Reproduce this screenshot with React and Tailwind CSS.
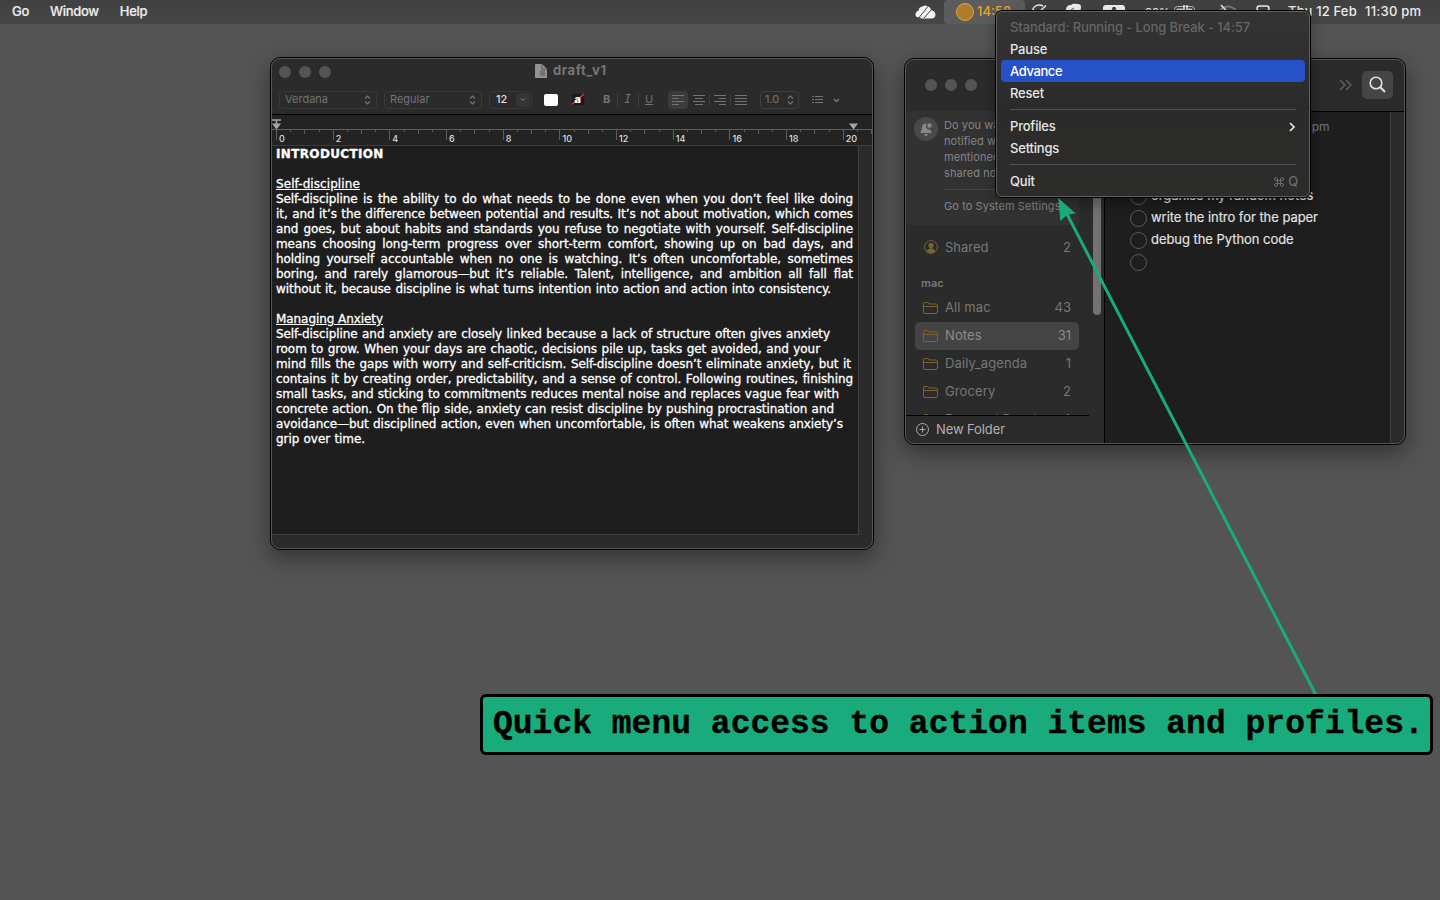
import clsx from 'clsx'

const introLines = [
  ['Self-discipline is the ability to do what needs to be done even when you don’t feel like doing', 577],
  ['it, and it’s the difference between potential and results. It’s not about motivation, which comes', 577],
  ['and goes, but about habits and standards you refuse to negotiate with yourself. Self-discipline', 577],
  ['means choosing long-term progress over short-term comfort, showing up on bad days, and', 577],
  ['holding yourself accountable when no one is watching. It’s often uncomfortable, sometimes', 577],
  ['boring, and rarely glamorous—but it’s reliable. Talent, intelligence, and ambition all fall flat', 577],
  ['without it, because discipline is what turns intention into action and action into consistency.', 555],
]

const anxietyLines = [
  ['Self-discipline and anxiety are closely linked because a lack of structure often gives anxiety', 554],
  ['room to grow. When your days are chaotic, decisions pile up, tasks get avoided, and your', 544],
  ['mind fills the gaps with worry and self-criticism. Self-discipline doesn’t eliminate anxiety, but it', 575],
  ['contains it by creating order, predictability, and a sense of control. Following routines, finishing', 577],
  ['small tasks, and sticking to commitments reduces mental noise and replaces vague fear with', 563],
  ['concrete action. On the flip side, anxiety can resist discipline by pushing procrastination and', 558],
  ['avoidance—but disciplined action, even when uncomfortable, is often what weakens anxiety’s', 567],
  ['grip over time.', 89],
]

const folders = [
  { name: 'All mac', count: 43 },
  { name: 'Notes', count: 31, active: true },
  { name: 'Daily_agenda', count: 1 },
  { name: 'Grocery', count: 2 },
]

function Lines({ lines }) {
  return lines.map(([text, width]) => (
    <p
      key={text}
      className="h-[15px] whitespace-nowrap [text-align-last:justify]"
      style={{ width }}
    >
      {text}
    </p>
  ))
}

function Dots() {
  return (
    <div className="flex gap-2">
      <i className="size-3 rounded-full bg-[#545454]" />
      <i className="size-3 rounded-full bg-[#545454]" />
      <i className="size-3 rounded-full bg-[#545454]" />
    </div>
  )
}

function UpDown() {
  return (
    <svg width="7" height="10" viewBox="0 0 7 10" fill="none" stroke="#777" strokeWidth="1.2">
      <path d="M1 3.5 3.5 1 6 3.5M1 6.5 3.5 9 6 6.5" />
    </svg>
  )
}

function AlignIcon({ rows }) {
  return (
    <svg width="12" height="10" viewBox="0 0 12 10" stroke="#747474" strokeWidth="1">
      {rows.map(([from, to], i) => (
        <path key={i} d={`M${from} ${i * 3 + 0.5}H${to}`} />
      ))}
    </svg>
  )
}

function Divider({ className }) {
  return <i className={clsx('h-3 w-px bg-[#3e3e3e]', className)} />
}

function Ruler() {
  const ticks = Array.from({ length: 43 }, (_, i) => i)
  return (
    <svg width="602" height="31" className="block bg-[#232323]" fontFamily="Inter, sans-serif">
      <path d="M0 14.5H602" stroke="#5e5e5e" />
      <path d="M0 30.5H602" stroke="#3b3b3b" />
      {ticks.map((i) => (
        <path
          key={i}
          d={`M${Math.round(4 + i * 14.17) + 0.5} 15v${i % 4 === 0 ? 10 : i % 2 === 0 ? 4 : 2}`}
          stroke="#5e5e5e"
        />
      ))}
      {ticks.filter((i) => i % 4 === 0).map((i) => (
        <text key={i} x={7 + i * 14.17} y="27" fontSize="9" fontWeight="500" fill="#dedede">
          {i / 2}
        </text>
      ))}
      <path d="M0 5H9M4.5 5V9" stroke="#a5a5a5" strokeWidth="1.5" />
      <path d="M0 8.5H9L4.5 14.5ZM577 8.5H586L581.5 14.5Z" fill="#a5a5a5" />
    </svg>
  )
}

function DocumentWindow() {
  return (
    <div className="absolute left-[270px] top-[57px] h-[493px] w-[604px] rounded-[10px] border border-black bg-[#2b2b2b] shadow-[0_8px_22px_rgba(0,0,0,0.4)]">
      <div className="h-full overflow-hidden rounded-[9px] border border-[#565656]">
        <div className="flex h-6 items-center pl-[7px] pt-[2px]">
          <Dots />
          <div className="ml-[204px] flex items-center gap-[6px] text-[13px] font-bold leading-4 text-[#767676]">
            <svg width="12" height="14" viewBox="0 0 12 14" className="-mt-[2px]">
              <path d="M1 0H7L12 5V13Q12 14 11 14H1Q0 14 0 13V1Q0 0 1 0Z" fill="#929292" />
              <path d="M7 0V5H12M5 7H10M5 9H10M5 11H10" fill="none" stroke="#555" />
            </svg>
            <span className="-mt-1 tracking-[0.6px]">draft_v1</span>
          </div>
        </div>
        <div className="flex h-[31px] items-center pl-[7px] pt-[2px] text-[11px] text-[#747474]">
          <div className="flex h-[18px] w-[98px] items-center justify-between rounded-[4px] border border-[#393939] px-[5px]">
            Verdana <UpDown />
          </div>
          <div className="ml-[7px] flex h-[18px] w-[98px] items-center justify-between rounded-[4px] border border-[#393939] px-[5px]">
            Regular <UpDown />
          </div>
          <div className="ml-[7px] flex h-[18px] w-[43px] items-center justify-between rounded-[4px] border border-[#393939] pl-[6px] pr-px font-medium text-[#dedede]">
            12
            <span className="flex h-[14px] w-[14px] items-center justify-center rounded-[3px] bg-[#353535]">
              <svg width="6" height="4" fill="none" stroke="#888"><path d="m1 .5 2 2 2-2" /></svg>
            </span>
          </div>
          <i className="ml-3 h-3 w-[14px] rounded-[2px] bg-white" />
          <svg width="16" height="15" className="ml-3">
            <rect x="1" y="1" width="14" height="13" rx="2" fill="#1a1a1a" stroke="#333" />
            <path d="M2 12.5 14 2" stroke="#d2453b" strokeWidth="1.4" />
            <text x="4.5" y="11" fontSize="11" fontWeight="800" fill="#fff">a</text>
          </svg>
          <b className="ml-[17px] w-[8px] text-[11px]">B</b>
          <Divider className="ml-[6px]" />
          <em className="ml-[6px] w-[7px] font-['Liberation_Mono',monospace] text-[12px]">I</em>
          <Divider className="ml-[7px]" />
          <u className="ml-[6px] w-[9px] text-[11px]">U</u>
          <span className="ml-[14px] flex h-[18px] w-5 items-center justify-center rounded-[4px] bg-[#3b3b3b]">
            <AlignIcon rows={[[0, 12], [0, 7], [0, 12], [0, 7]]} />
          </span>
          <span className="ml-[5px]"><AlignIcon rows={[[0, 12], [2, 10], [0, 12], [2, 10]]} /></span>
          <Divider className="ml-[4px]" />
          <span className="ml-[4px]"><AlignIcon rows={[[0, 12], [5, 12], [0, 12], [5, 12]]} /></span>
          <Divider className="ml-[4px]" />
          <span className="ml-[4px]"><AlignIcon rows={[[0, 12], [0, 12], [0, 12], [0, 12]]} /></span>
          <div className="ml-[13px] flex h-[18px] w-[39px] items-center justify-between rounded-[4px] border border-[#3e3e3e] px-[4px]">
            1.0 <UpDown />
          </div>
          <svg width="29" height="9" className="ml-[13px]" fill="none" stroke="#747474">
            <path d="M0 1.5H2M3 1.5H11M0 4.5H2M3 4.5H11M0 7.5H2M3 7.5H11" />
            <path d="m22 4 2.500 2.500 2.500-2.500" strokeWidth="1.5" />
          </svg>
        </div>
        <div className="h-px bg-black" />
        <Ruler />
        <div className="h-[389px] w-[587px] border-b border-r border-[#424242] bg-[#1e1e1e] pl-1 pt-px font-['DejaVu_Sans',sans-serif] text-[12px] leading-[15px] tracking-[-0.07px] text-white [-webkit-text-stroke:0.3px_white]">
          <p className="mb-[15px] font-bold tracking-[0.35px]">INTRODUCTION</p>
          <p className="tracking-[0.08px] underline underline-offset-1">Self-discipline</p>
          <Lines lines={introLines} />
          <p className="mt-[15px] underline underline-offset-1">Managing Anxiety</p>
          <Lines lines={anxietyLines} />
        </div>
      </div>
    </div>
  )
}

function Folder() {
  return (
    <svg width="15" height="12" viewBox="0 0 15 12" fill="none" stroke="#7b6333">
      <path d="M.5 10V2Q.5.5 2 .5H4.500L6 2H13Q14.500 2 14.500 3.500V10Q14.500 11.500 13 11.500H2Q.5 11.500.5 10ZM.5 4.500H14.500" />
    </svg>
  )
}

function NotesSidebar() {
  return (
    <div className="flex w-[198px] flex-col text-[13px] text-[#777]">
      <div className="flex h-[304px] shrink-0 overflow-hidden">
        <div className="w-[173px] shrink-0">
          <div className="flex h-[114px] gap-[6px] rounded-[3px] bg-[#323232] pl-2 pt-[6px] text-[11px] leading-4 text-[#858585]">
            <span className="flex size-6 shrink-0 items-center justify-center rounded-full bg-[#494949]">
              <svg width="14" height="15" viewBox="0 0 14 15" fill="#888">
                <path d="M6 1.500C3.500 2 3 4 3 7L1.500 10V11H12.500V10L11 7.500A3.500 3.500 0 0 1 7.500 2ZM5 12H9Q8.500 14 7 14T5 12Z" />
                <circle cx="10.500" cy="3.500" r="2.200" />
              </svg>
            </span>
            <div className="w-[124px] whitespace-nowrap tracking-[0.08px]">
              <p>Do you want to be</p>
              <p>notified when</p>
              <p>mentioned in</p>
              <p>shared notes?</p>
              <div className="mb-2 mt-2 h-px bg-[#454545]" />
              <p>Go to System Settings</p>
            </div>
          </div>
          <div className="mt-2 flex h-7 items-center pl-[18px] pr-[8px]">
            <svg width="14" height="14" viewBox="0 0 14 14" fill="none" stroke="#7b6333">
              <circle cx="7" cy="7" r="6.400" />
              <circle cx="7" cy="5.500" r="2.200" fill="#7b6333" />
              <path d="M3 11Q4 8.700 7 8.700T11 11Q9 13 7 13T3 11Z" fill="#7b6333" />
            </svg>
            <span className="ml-[7px] grow pt-px">Shared</span>
            <span className="pt-px">2</span>
          </div>
          <p className="mt-[15px] pl-[15px] text-[11px] font-semibold leading-[14px]">mac</p>
          <div className="mt-1">
            {folders.map(({ name, count, active }) => (
              <div
                key={name}
                className={clsx(
                  'ml-[9px] flex h-7 items-center rounded-[5px] pb-px pl-[8px] pr-[8px]',
                  active && 'bg-[#444] text-[#8b8b8b]'
                )}
              >
                <Folder />
                <span className="ml-[7px] grow pt-px tracking-[0.1px]">{name}</span>
                <span className="pt-px">{count}</span>
              </div>
            ))}
            <div className="ml-[9px] flex h-7 items-center pl-[8px] pr-[8px]">
              <Folder />
              <span className="ml-[7px] grow">Personal Develop</span>
              4
            </div>
          </div>
        </div>
        <div className="ml-[14px] h-[204px] w-2 rounded-b-full bg-[#727272]" />
      </div>
      <div className="-ml-px h-px w-[184px] shrink-0 bg-black" />
      <div className="flex grow items-center gap-[7px] pl-[10px] tracking-[-0.1px] text-[#b0b0b0]">
        <svg width="13" height="13" viewBox="0 0 13 13" fill="none" stroke="#aaa">
          <circle cx="6.500" cy="6.500" r="6" />
          <path d="M6.500 3.500V9.500M3.500 6.500H9.500" />
        </svg>
        <span className="pt-px">New Folder</span>
      </div>
    </div>
  )
}

function NotesWindow() {
  const todos = ['organise my random notes', 'write the intro for the paper', 'debug the Python code', '']
  return (
    <div className="absolute left-[904px] top-[58px] h-[387px] w-[502px] rounded-[10px] border border-black bg-[#2b2b2b] shadow-[0_8px_22px_rgba(0,0,0,0.4)]">
      <div className="flex h-full flex-col overflow-hidden rounded-[9px] border border-[#565656]">
        <div className="flex h-[51px] shrink-0 items-center justify-between pb-[2px] pl-[19px] pr-[11px]">
          <Dots />
          <div className="flex items-center gap-[10px]">
            <svg width="13" height="12" viewBox="0 0 13 12" fill="none" stroke="#666" strokeWidth="1.200">
              <path d="m1 1 5 5-5 5M7 1l5 5-5 5" />
            </svg>
            <span className="flex h-7 w-[31px] items-center justify-center rounded-[5px] bg-[#454545]">
              <svg width="17" height="17" viewBox="0 0 17 17" fill="none" stroke="#e4e4e4" strokeWidth="1.600">
                <circle cx="7" cy="7" r="5.800" />
                <path d="m11.300 11.300 4.700 4.700" strokeWidth="2" />
              </svg>
            </span>
          </div>
        </div>
        <div className="flex grow">
          <NotesSidebar />
          <div className="flex grow border-l border-t border-black">
            <div className="w-[286px] border-r border-[#424242] bg-[#1e1e1e] text-[13px] text-[#e4e4e4]">
              <p className="mt-[6px] pl-[89px] text-[12px] leading-[18px] text-[#777]">12 Feb 2026 at 11:27 pm</p>
              <div className="mt-[48px]">
                {todos.map((todo) => (
                  <div key={todo} className="flex h-[22px] items-center gap-1 whitespace-nowrap pl-[25px]">
                    <i className="mt-[3px] size-[17px] rounded-full border border-[#5c5c5c]" />
                    <span className="pt-[2px] tracking-[-0.05px] [-webkit-text-stroke:0.15px_#e4e4e4]">{todo}</span>
                  </div>
                ))}
              </div>
            </div>
          </div>
        </div>
      </div>
    </div>
  )
}

function MenuBar() {
  return (
    <header className="flex h-6 items-center bg-gradient-to-b from-[#404040] to-[#464646] text-[13px] font-medium text-[#ececec]">
      <nav className="flex gap-[21px] pl-3 tracking-[-0.3px] [-webkit-text-stroke:0.2px_#ececec]">
        <span>Go</span>
        <span>Window</span>
        <span>Help</span>
      </nav>
      <div className="ml-auto flex h-full items-center">
        <svg width="21" height="14" viewBox="0 0 21 14" fill="#f2f2f2">
          <path d="M.5 9.500Q.5 6.500 3.500 5.500Q4 2 7.500 1.500Q10-.5 12.500 1.500Q15 1 16 5Q20.500 6 20.500 10Q20 13.500 16.500 13.500H8Q5 13.500 5 12Q.5 13 .5 9.500Z" />
          <path d="M4.500 12 12.500 2M9 13 16 5" stroke="#444" strokeWidth="1" />
        </svg>
        <div className="ml-2 flex h-full w-[81px] items-center gap-[3px] rounded-[4px] bg-[#5c5c5c] pl-3 text-[#e8a32a]">
          <i className="size-[18px] shrink-0 rounded-full border border-[#e2a63c] bg-[#ad7d2c]" />
          14:58
        </div>
        <svg width="18" height="18" viewBox="0 0 18 18" className="ml-[5px]" fill="none" stroke="#eee" strokeWidth="1.500">
          <path d="M13 3A7 7 0 1 0 16 7M8 10l8-7.500" />
        </svg>
        <svg width="17" height="18" viewBox="0 0 17 18" className="ml-[17px]" fill="#eee">
          <path d="M1 7Q1 2 6 2Q8 0 12 1Q16 .5 16 4Q16 8 13 10L9 14 6 9Q1 10 1 7Z" />
          <path d="m6 7 3-2" stroke="#444" />
        </svg>
        <span className="ml-[21px] flex h-[15px] w-[22px] items-center justify-center rounded-[3px] bg-[#eee] text-[12px] font-bold text-[#333]">A</span>
        <span className="ml-[20px] w-[24px] pt-px text-[11px]">80%</span>
        <svg width="24" height="14" viewBox="0 0 24 14" className="ml-[5px]" fill="none" stroke="#bbb">
          <rect x=".5" y="1.500" width="20" height="11" rx="3" />
          <path d="M3 4H9V10H3ZM14 4H18V10H14Z" fill="#eee" />
          <path d="M10 0V6M13 0V6" stroke="#eee" strokeWidth="1.500" />
        </svg>
        <svg width="20" height="18" viewBox="0 0 20 18" className="ml-[20px]" fill="none" stroke="#777" strokeWidth="2">
          <path d="M2 7Q10 0 18 7M5 10Q10 6 15 10" />
          <path d="m3 2 13 14" stroke="#eee" strokeWidth="1.500" />
        </svg>
        <svg width="14" height="14" viewBox="0 0 14 14" className="ml-[18px]" fill="none" stroke="#eee" strokeWidth="1.500">
          <rect x="1" y="1" width="12" height="5" rx="2.500" />
          <rect x="1" y="8" width="12" height="5" rx="2.500" fill="#eee" />
        </svg>
        <span className="ml-[18px] w-[70px] whitespace-nowrap tracking-[0.15px]">Thu 12 Feb</span>
        <span className="ml-[7px] mr-[18px] w-[57px] whitespace-nowrap tracking-[0.25px]">11:30 pm</span>
      </div>
    </header>
  )
}

function MenuItem({ children, className }) {
  return (
    <div className={clsx('mx-[4px] flex h-[22px] items-center justify-between rounded-[4px] px-[9px] pt-[2px]', className)}>
      {children}
    </div>
  )
}

function MenuLine() {
  return <div className="mx-[13px] my-[5px] h-px bg-[#505050]" />
}

function DropdownMenu() {
  return (
    <div className="absolute left-[995px] top-[10px] h-[188px] w-[316px] rounded-[7px] border border-black bg-[#2c2c2b] shadow-[0_6px_14px_rgba(0,0,0,0.3)]">
      <div className="h-full rounded-[6px] border border-[#5d5d5d] bg-gradient-to-b from-[#343434] via-[#2b2b2b] to-[#2d2c2a] pt-1 text-[13px] font-medium tracking-[-0.2px] text-[#e6e6e6]">
        <MenuItem className="tracking-[-0.11px] text-[#656565]">Standard: Running - Long Break - 14:57</MenuItem>
        <MenuItem>Pause</MenuItem>
        <MenuItem className="bg-[#2752c7] tracking-[-0.4px] text-white">Advance</MenuItem>
        <MenuItem>Reset</MenuItem>
        <MenuLine />
        <MenuItem>
          Profiles
          <svg width="7" height="10" viewBox="0 0 7 10" fill="none" stroke="#e6e6e6" strokeWidth="1.700">
            <path d="m1 1 4 4-4 4" />
          </svg>
        </MenuItem>
        <MenuItem>Settings</MenuItem>
        <MenuLine />
        <MenuItem>
          Quit
          <span className="-mr-[2px] flex items-center gap-1 text-[#6b6b6b]">
            <svg width="10" height="10" viewBox="0 0 10 10" fill="none" stroke="#6b6b6b">
              <path d="M3.500 3.500H6.500V6.500H3.500ZM3.500 3.500H2A1.500 1.500 0 1 1 3.500 2ZM6.500 3.500V2A1.500 1.500 0 1 1 8 3.500ZM6.500 6.500H8A1.500 1.500 0 1 1 6.500 8ZM3.500 6.500V8A1.500 1.500 0 1 1 2 6.500Z" />
            </svg>
            Q
          </span>
        </MenuItem>
      </div>
    </div>
  )
}

export default function App() {
  return (
    <div className="relative h-[900px] w-[1440px] overflow-hidden bg-[#545454] font-['Inter',sans-serif]">
      <MenuBar />
      <DocumentWindow />
      <NotesWindow />
      <DropdownMenu />

      {/* Arrow from the callout up to the menu */}
      <svg className="absolute left-0 top-0" width="1440" height="900">
        <path d="M1316 695 1067 214" stroke="#1aab7c" strokeWidth="3" />
        <path d="M1058.300 198 1075.700 213.500 1067.700 214.500 1060.300 221Z" fill="#1aab7c" />
      </svg>
      <div className="absolute left-[480px] top-[694px] flex h-[61px] w-[953px] items-center whitespace-pre rounded-[6px] border-[3.500px] border-black bg-[#1aab7c] pl-[10px] font-['Liberation_Mono',monospace] text-[33px] font-bold text-black [-webkit-text-stroke:0.3px_black]">
        Quick menu access to action items and profiles.
      </div>
    </div>
  )
}
